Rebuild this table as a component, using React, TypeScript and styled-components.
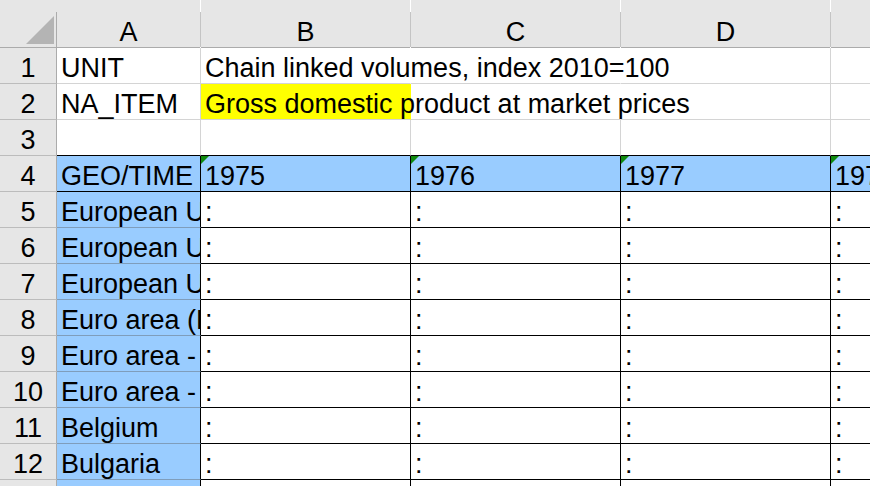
import React from "react";
import styled, { createGlobalStyle, css } from "styled-components";

const GlobalStyle = createGlobalStyle`
  html, body { margin: 0; padding: 0; background: #ffffff; overflow: hidden; }
  body { font-family: "Liberation Sans", Arial, sans-serif; }
`;

const GRID = "#d4d4d4";
const BLACK = "#000000";
const HAIR = "#7f9dbb";
const HEAD_BG = "#e6e6e6";
const HEAD_LINE = "#ababab";

type Line = "grid" | "black" | "hair" | "none";
type Fill = "none" | "blue" | "yellow";

const lineColor = (l: Line) =>
  l === "black" ? BLACK : l === "hair" ? HAIR : l === "grid" ? GRID : "transparent";

const fillColor = (f: Fill) =>
  f === "blue" ? "#99ccff" : f === "yellow" ? "#ffff00" : "transparent";

const Sheet = styled.div`
  width: 870px;
  height: 486px;
  overflow: hidden;
  background: #ffffff;
`;

const Grid = styled.div`
  display: grid;
  grid-template-columns: 57px 144px 210px 210px 210px 210px;
  grid-template-rows: 48px;
  grid-auto-rows: 36px;
  width: max-content;
  font-size: 27px;
  line-height: 28px;
  color: #000000;
`;

const HeaderBase = styled.div`
  position: relative;
  background: ${HEAD_BG};
  border-bottom: 1px solid ${HEAD_LINE};
  display: flex;
  align-items: flex-end;
  &::after {
    content: "";
    position: absolute;
    top: 12px;
    bottom: 0;
    right: -1px;
    width: 1px;
    background: #c4c4c4;
  }
`;

const Corner = styled(HeaderBase)`
  justify-content: flex-end;
  padding: 0 3px 3px 0;
  &::after {
    right: 0;
    background: ${HEAD_LINE};
  }
`;

const CornerTriangle = styled.div`
  width: 28px;
  height: 28px;
  background: #b4b4b4;
  clip-path: polygon(100% 0, 100% 100%, 0 100%);
`;

const ColumnHeader = styled(HeaderBase)`
  justify-content: center;
  padding-bottom: 1px;
  margin-right: 1px;
`;

const RowHeader = styled.div`
  background: ${HEAD_BG};
  border-right: 1px solid ${HEAD_LINE};
  border-bottom: 1px solid #bcbcbc;
  display: flex;
  align-items: flex-end;
  justify-content: center;
  padding-bottom: 1px;
`;

const Cell = styled.div<{
  $fill?: Fill;
  $right?: Line;
  $bottom?: Line;
  $spill?: boolean;
  $flag?: boolean;
}>`
  position: relative;
  display: flex;
  align-items: flex-end;
  padding: 0 0 1px 4px;
  white-space: nowrap;
  min-width: 0;
  background: ${(p) => fillColor(p.$fill ?? "none")};
  border-right: 1px solid ${(p) => lineColor(p.$right ?? "grid")};
  border-bottom: 1px solid ${(p) => lineColor(p.$bottom ?? "grid")};
  overflow: ${(p) => (p.$spill ? "visible" : "hidden")};
  ${(p) =>
    p.$flag &&
    css`
      &::before {
        content: "";
        position: absolute;
        top: 0;
        left: 0;
        width: 8px;
        height: 8px;
        background: #0f8a0f;
        clip-path: polygon(0 0, 100% 0, 0 100%);
      }
    `}
`;

const columns = ["A", "B", "C", "D", "E"];
const years = ["1975", "1976", "1977", "1978"];
const countries = [
  "European Union - 28 countries",
  "European Union - 27 countries (2007-2013)",
  "European Union - 15 countries (1995-2004)",
  "Euro area (EA11-2000, EA12-2006, EA13-2007)",
  "Euro area - 19 countries",
  "Euro area - 18 countries",
  "Belgium",
  "Bulgaria",
  "Czechia",
];

export default function App() {
  return (
    <Sheet>
      <GlobalStyle />
      <Grid>
        <Corner>
          <CornerTriangle />
        </Corner>
        {columns.map((c) => (
          <ColumnHeader key={c}>{c}</ColumnHeader>
        ))}

        <RowHeader>1</RowHeader>
        <Cell>UNIT</Cell>
        <Cell $spill $right="none">Chain linked volumes, index 2010=100</Cell>
        <Cell $right="none" />
        <Cell />
        <Cell />

        <RowHeader>2</RowHeader>
        <Cell>NA_ITEM</Cell>
        <Cell $spill $fill="yellow" $right="none">
          Gross domestic product at market prices
        </Cell>
        <Cell $right="none" />
        <Cell />
        <Cell />

        <RowHeader>3</RowHeader>
        <Cell $bottom="black" />
        <Cell $bottom="black" />
        <Cell $bottom="black" />
        <Cell $bottom="black" />
        <Cell $bottom="black" />

        <RowHeader>4</RowHeader>
        <Cell $fill="blue" $right="black" $bottom="black">GEO/TIME</Cell>
        {years.map((y) => (
          <Cell key={y} $fill="blue" $right="black" $bottom="black" $flag>
            {y}
          </Cell>
        ))}

        {countries.map((name, i) => (
          <React.Fragment key={name}>
            <RowHeader>{i + 5}</RowHeader>
            <Cell $fill="blue" $right="black" $bottom="hair">
              {name}
            </Cell>
            {years.map((y) => (
              <Cell key={y} $right="black" $bottom="black">
                :
              </Cell>
            ))}
          </React.Fragment>
        ))}
      </Grid>
    </Sheet>
  );
}
